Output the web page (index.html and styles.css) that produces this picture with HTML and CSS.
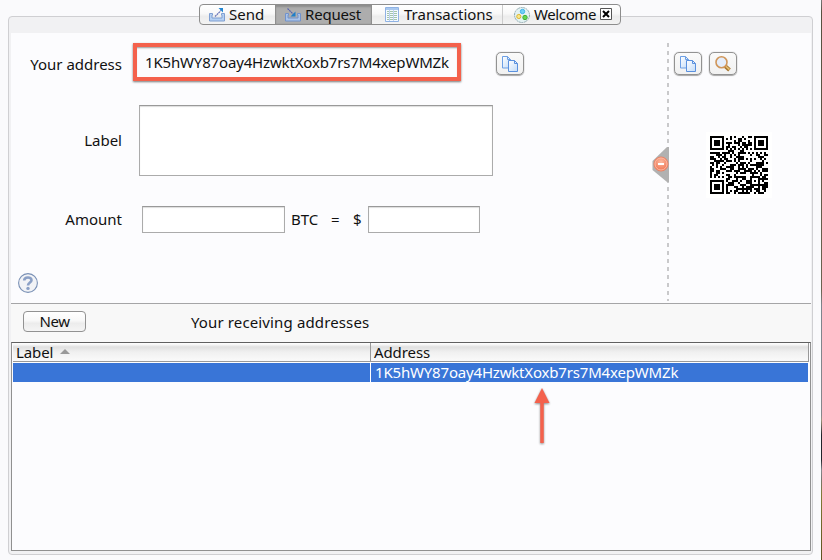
FILE: index.html
```
<!DOCTYPE html>
<html lang="en">
<head>
<meta charset="utf-8">
<title>Request</title>
<link rel="stylesheet" href="styles.css">
</head>
<body>
<svg class="defs" aria-hidden="true">
  <defs>
    <linearGradient id="sheet" x1="0" y1="0" x2="1" y2="1"><stop offset="0" stop-color="#fff"/><stop offset="1" stop-color="#c3dcf8"/></linearGradient>
    <radialGradient id="ball" cx=".5" cy=".35" r=".7"><stop offset="0" stop-color="#fbb9a0"/><stop offset="1" stop-color="#ef6c48"/></radialGradient>
    <symbol id="copy" viewBox="0 0 18 18">
      <path d="M1.500 1.500h5l3 3v8.500h-8z" fill="url(#sheet)" stroke="#6d9fe4"/>
      <path d="M6.500 1.500v3h3" fill="none" stroke="#6d9fe4"/>
      <path d="M7.500 5.500h6l3 3v8h-9z" fill="url(#sheet)" stroke="#5a90de"/>
      <path d="M13.500 5.500v3h3" fill="none" stroke="#5a90de"/>
    </symbol>
  </defs>
</svg>
<div class="window">
  <nav class="tabs">
    <div class="tab send">
      <svg width="16" height="15" viewBox="0 0 16 15"><path d="M.5 6.500h3V8H3v3h10V8h-.5V6.500h3v7.500H.5z" fill="#b5d0f2" stroke="#7f9fd2"/><path d="M6 9.500l6-6" stroke="#6673b8" stroke-width="1.200" stroke-dasharray="2 .5"/><path d="M9.500 1H14v4.500z" fill="#2286d2"/></svg>
      <span>Send</span>
    </div>
    <div class="tab request">
      <svg width="16" height="15" viewBox="0 0 16 15"><path d="M.5 6.500h3V8H3v3h10V8h-.5V6.500h3v7.500H.5z" fill="#a9c3e8" stroke="#7192cc"/><path d="M2.500 1.500l6 6" stroke="#5864ae" stroke-width="1.200" stroke-dasharray="2 .5"/><path d="M10.500 4.500V9.500H5.500z" fill="#1d7fc9"/></svg>
      <span>Request</span>
    </div>
    <div class="tab transactions">
      <svg width="14" height="15" viewBox="0 0 14 15"><path d="M.5.5h13v14H.5z" fill="#f4f9ff" stroke="#8fb2e4"/><path d="M1 2h12" stroke="#a9c8ef" stroke-width="2"/><path d="M2 4.500h10M2 6.500h10M2 8.500h10M2 10.500h10M2 12.500h10" stroke="#a3c5ab"/><path d="M4.500 3v11M8.500 3v11" stroke="#bfd3f0"/></svg>
      <span>Transactions</span>
    </div>
    <div class="tab welcome">
      <svg width="16" height="16" viewBox="0 0 16 16"><circle cx="8" cy="8" r="7.500" fill="#e3f2f3" stroke="#8fa9b0" stroke-dasharray="2 .6"/><circle cx="8.500" cy="4.500" r="2.200" fill="#6fd0f7" stroke="#42b4ea"/><circle cx="4.800" cy="9.500" r="2.100" fill="#f7e78a" stroke="#dfb52e"/><circle cx="11" cy="10.500" r="2.200" fill="#65d552" stroke="#3fb036"/></svg>
      <span>Welcome</span>
      <svg class="close" width="12" height="12" viewBox="0 0 12 12"><path d="M.5.5h11v11H.5z" fill="#fff" stroke="#555"/><path d="M3 3l6 6M9 3l-6 6" stroke="#000" stroke-width="2"/></svg>
    </div>
  </nav>
  <main class="panel">
    <section class="upper">
      <div class="form">
        <div class="row address">
          <label>Your address</label>
          <div class="marked"><span>1K5hWY87oay4HzwktXoxb7rs7M4xepWMZk</span></div>
          <button class="tool"><svg width="18" height="18"><use href="#copy"/></svg></button>
        </div>
        <div class="row note">
          <label>Label</label>
          <div class="field area"></div>
        </div>
        <div class="row amount">
          <label>Amount</label>
          <div class="field btc"></div>
          <span class="unit">BTC</span><span class="equals">=</span><span class="dollar">$</span>
          <div class="field usd"></div>
        </div>
        <svg class="help" width="20" height="20" viewBox="0 0 20 20"><circle cx="10" cy="10" r="9.400" fill="#f2f3f6" stroke="#7990b5" stroke-width="1.100"/><path d="M6.200 7.500C6.200 3.500 13.700 3.500 13.500 7.200C13.400 9.600 10 9.500 10 12.600" fill="none" stroke="#8ba0c6" stroke-width="2.600"/><circle cx="10" cy="15.400" r="1.700" fill="#8ba0c6"/></svg>
      </div>
      <div class="divider">
        <svg class="dashes" width="2" height="258"><path d="M1 0v258" stroke="#c9c9cb" stroke-width="2" stroke-dasharray="4 4"/></svg>
        <svg class="collapse" width="17" height="37" viewBox="0 0 17 37"><path d="M17 1h-2L.5 15v9l14.500 12h2z" fill="#b1b1b1"/><circle cx="9" cy="18" r="7" fill="url(#ball)" stroke="#ed8060"/><circle cx="9" cy="18" r="6" fill="none" stroke="#fbc3b0" stroke-width=".8"/><path d="M6 18h6" stroke="#fff" stroke-width="2"/></svg>
      </div>
      <aside class="side">
        <div class="tools">
          <button class="tool"><svg width="18" height="18"><use href="#copy"/></svg></button>
          <button class="tool"><svg width="18" height="18" viewBox="0 0 18 18"><path d="M11 11l4.500 4" stroke="#a87732" stroke-width="4"/><path d="M11.500 11l4 3.600" stroke="#e6c173" stroke-width="1.500"/><circle cx="7.500" cy="7.200" r="5.500" fill="#e4edfb" stroke="#d0965a" stroke-width="1.600"/></svg></button>
        </div>
        <div class="code" id="code"></div>
      </aside>
    </section>
    <section class="toolbar">
      <button class="new">New</button>
      <h2>Your receiving addresses</h2>
    </section>
    <section class="table">
      <div class="head"><div>Label<i class="sort"></i></div><div>Address</div></div>
      <div class="record"><div></div><div>1K5hWY87oay4HzwktXoxb7rs7M4xepWMZk</div></div>
      <svg class="arrow" width="18" height="60" viewBox="0 0 18 60"><path d="M9 14v42" stroke="#f4614c" stroke-width="3.500"/><path d="M9 1l7.500 15h-15z" fill="#f4614c"/></svg>
    </section>
  </main>
  <div class="edge"></div>
</div>
<script src="qr.js"></script>
</body>
</html>
```
FILE: styles.css
```
* { box-sizing: border-box; }

body {
  margin: 0;
  background: #fafafc;
  color: #111;
  font: 15px/20px "Noto Sans", sans-serif;
  white-space: nowrap;
}

svg { display: block; flex: none; }

.defs { position: absolute; width: 0; height: 0; }

button {
  flex: none;
  padding: 0;
  color: inherit;
  font: inherit;
}

.window {
  position: relative;
  display: flex;
  flex-direction: column;
  height: 560px;
  padding: 4px 9px 5px 8px;
  overflow: hidden;
}

.edge {
  position: absolute;
  top: 0;
  right: 0;
  width: 1px;
  height: 100%;
  background: linear-gradient(#777 0, #575040 12px, #6b6250 290px, #7d848c 305px, #85878c 415px, #9a917a 420px, #22242a 435px, #22242a 460px, #85878c 470px, #77746c 480px, #807a35 495px, #5e5020);
}

/* Tabs */
.tabs {
  position: relative;
  z-index: 1;
  display: flex;
  align-self: flex-start;
  width: 422px;
  height: 21px;
  margin-left: 191px;
  border: 1px solid #8d8d8d;
  border-radius: 4px;
  background: linear-gradient(#fff, #f8f8f8 45%, #ececec 60%, #f3f3f3);
}

.tab {
  display: flex;
  align-items: center;
  height: 19px;
}

.tab svg { margin-right: 5px; }
.tab span { margin: -1px 0 1px -1px; }

.send { width: 75px; padding-left: 9px; }

.request {
  width: 97px;
  padding-left: 10px;
  background: #adadad;
  box-shadow: inset 0 2px 2px #8d8d8d, inset 1px 0 1px #8d8d8d, inset -1px 0 1px #8d8d8d;
}

.request span { letter-spacing: -.18px; }

.transactions {
  width: 131px;
  padding-left: 13px;
  border-right: 1px solid #ccc;
}

.transactions span { margin-left: 0; }

.welcome { padding-left: 11px; }
.welcome span { letter-spacing: -.38px; }
.welcome .close { margin: -1px 0 1px 4px; }

/* Panel */
.panel {
  flex: 1;
  display: flex;
  flex-direction: column;
  width: 805px;
  margin-top: -9px;
  padding: 16px 1px 3px 2px;
  border: 1px solid #cfcfd2;
  border-radius: 4px;
  background: #f1f1f3;
}

.upper {
  display: flex;
  height: 271px;
  border-bottom: 1px solid #a5a5a7;
  background: #fcfcfe;
}

.form { width: 656px; padding-top: 10px; }

.row { display: flex; }

.row label {
  flex: none;
  width: 111px;
  margin-right: 1px;
  text-align: right;
}

.address { height: 62px; }
.address label { padding-top: 11px; }

.marked {
  flex: none;
  width: 328px;
  height: 38px;
  margin-left: 10px;
  padding: 5px 8px;
  border: 4px solid #f4614c;
  background: #fcfcfe;
  box-shadow: 0 1px 2px #777, inset 0 2px 2px -1px #999;
}

.marked span { letter-spacing: -.16px; }

.tool {
  display: grid;
  place-items: center;
  width: 28px;
  height: 23px;
  border: 1px solid #929292;
  border-radius: 5px;
  background: linear-gradient(#fafafa, #f1f1f1);
  box-shadow: 0 0 1px #999, 0 1px 1px #aaa;
}

.address .tool { margin: 9px 0 0 35px; }

.note { height: 101px; }
.note label { padding-top: 25px; }

.field {
  flex: none;
  border: 1px solid #ababab;
  border-top-color: #999;
  background: #fff;
  box-shadow: inset 0 1px 1px #ddd;
}

.area { width: 354px; height: 71px; margin-left: 16px; }

.amount label, .amount span { padding-top: 3px; }
.btc { width: 143px; height: 27px; margin-left: 19px; }
.unit { width: 40px; margin-left: 6px; }
.equals { width: 22px; }
.dollar { width: 15px; }
.usd { width: 112px; height: 27px; }

.help { margin: 40px 0 0 7px; }

.divider { position: relative; width: 2px; padding-top: 10px; }

.collapse { position: absolute; top: 113px; left: -15px; }

.side { padding: 19px 0 0 5px; }
.tools { display: flex; gap: 7px; }

.code {
  width: 66px;
  height: 66px;
  margin: 57px 0 0 32px;
  padding: 4px;
  background: #fff;
}

/* Toolbar */
.toolbar {
  display: flex;
  height: 38px;
  padding: 7px 0 0 12px;
  background: #f8f8f8;
}

.new {
  width: 63px;
  height: 21px;
  border: 1px solid #929292;
  border-radius: 4px;
  background: linear-gradient(#fff, #f8f8f8 45%, #ececec 60%, #f5f5f5);
  line-height: 19px;
  letter-spacing: -.4px;
}

.toolbar h2 {
  margin: 1px 0 0 105px;
  font-size: 15px;
  font-weight: normal;
  letter-spacing: .13px;
}

/* Address table */
.table {
  position: relative;
  flex: 1;
  padding: 0 1px;
  border: 1px solid #909090;
  border-top-color: #606060;
  background: #fcfcfe;
}

.head, .record { display: grid; grid-template-columns: 357px 1fr; }

.head {
  height: 19px;
  border-right: 1px solid #999;
  border-bottom: 1px solid #999;
  background: linear-gradient(#fcfcfc 1px, #e0e0e0 4px, #f0f0f0 9px, #fafafa);
  line-height: 18px;
}

.head div { display: flex; padding-left: 3px; letter-spacing: -.1px; }
.head div + div { border-left: 1px solid #999; }

.sort {
  width: 0;
  height: 0;
  margin: 6px 0 0 7px;
  border: 5px solid transparent;
  border-top: 0;
  border-bottom-color: #999;
}

.record {
  height: 20px;
  margin-right: 1px;
  border-top: 1px solid #fff;
  background: #3975d7;
  color: #fff;
  line-height: 19px;
}

.record div + div {
  padding-left: 4px;
  border-left: 1px solid #fff;
  letter-spacing: -.18px;
}

.arrow {
  position: absolute;
  top: 44px;
  left: 521px;
  filter: drop-shadow(0 1px 1px #888);
}
```
FILE: qr.js
```
// Version 3 QR code (29 x 29 modules), level L, byte mode.
function qr(text) {
  var n = 29, dl = 55, el = 15, i, j, x, y;
  var bits = [];
  function put(v, c) { while (c--) bits.push(v >> c & 1); }
  put(4, 4); put(text.length, 8);
  for (i = 0; i < text.length; i++) put(text.charCodeAt(i), 8);
  put(0, 4);
  for (var p = 0; bits.length < dl * 8; p ^= 1) put(p ? 17 : 236, 8);
  var data = [];
  for (i = 0; i < dl; i++) data.push(parseInt(bits.slice(i * 8, i * 8 + 8).join(''), 2));

  // Reed-Solomon remainder
  function mul(a, b) {
    var r = 0;
    for (; b; b >>= 1) { if (b & 1) r ^= a; a <<= 1; if (a & 256) a ^= 285; }
    return r;
  }
  var gen = [1], root = 1;
  for (i = 0; i < el; i++) {
    var next = gen.concat(0);
    for (j = 0; j < gen.length; j++) next[j + 1] ^= mul(gen[j], root);
    gen = next;
    root = mul(root, 2);
  }
  var rem = data.concat(Array(el).fill(0));
  for (i = 0; i < dl; i++) {
    var f = rem[i];
    for (j = 0; j <= el; j++) rem[i + j] ^= mul(gen[j], f);
  }
  bits = [];
  data.concat(rem.slice(dl)).forEach(function (c) { put(c, 8); });

  var masks = [
    function (y, x) { return (x + y) % 2; },
    function (y) { return y % 2; },
    function (y, x) { return x % 3; },
    function (y, x) { return (x + y) % 3; },
    function (y, x) { return ((x / 3 | 0) + (y >> 1)) % 2; },
    function (y, x) { return x * y % 2 + x * y % 3; },
    function (y, x) { return (x * y % 2 + x * y % 3) % 2; },
    function (y, x) { return ((x + y) % 2 + x * y % 3) % 2; }
  ];

  function build(mask) {
    var m = [], used = [];
    for (i = 0; i < n; i++) { m.push(Array(n).fill(0)); used.push(Array(n).fill(0)); }
    function set(y, x, v) {
      if (y >= 0 && x >= 0 && y < n && x < n) { m[y][x] = v ? 1 : 0; used[y][x] = 1; }
    }
    for (i = 0; i < n; i++) { set(6, i, i % 2 === 0); set(i, 6, i % 2 === 0); }
    [[3, 3], [3, n - 4], [n - 4, 3]].forEach(function (c) {
      for (y = -4; y <= 4; y++) for (x = -4; x <= 4; x++) {
        var d = Math.max(Math.abs(x), Math.abs(y));
        set(c[0] + y, c[1] + x, d !== 2 && d !== 4);
      }
    });
    for (y = -2; y <= 2; y++) for (x = -2; x <= 2; x++)
      set(22 + y, 22 + x, Math.max(Math.abs(x), Math.abs(y)) !== 1);
    var fd = 8 | mask, r = fd;
    for (i = 0; i < 10; i++) r = r << 1 ^ (r >> 9) * 0x537;
    var fb = (fd << 10 | r) ^ 0x5412;
    function b(k) { return fb >> k & 1; }
    for (i = 0; i < 6; i++) set(i, 8, b(i));
    set(7, 8, b(6)); set(8, 8, b(7)); set(8, 7, b(8));
    for (i = 9; i < 15; i++) set(8, 14 - i, b(i));
    for (i = 0; i < 8; i++) set(8, n - 1 - i, b(i));
    for (i = 8; i < 15; i++) set(n - 15 + i, 8, b(i));
    set(n - 8, 8, 1);
    var k = 0;
    for (var right = n - 1; right >= 1; right -= 2) {
      if (right === 6) right = 5;
      for (var v = 0; v < n; v++) for (j = 0; j < 2; j++) {
        x = right - j;
        y = ((right + 1) & 2) === 0 ? n - 1 - v : v;
        if (!used[y][x]) m[y][x] = (bits[k++] || 0) ^ (masks[mask](y, x) === 0 ? 1 : 0);
      }
    }
    return m;
  }

  function penalty(m) {
    var score = 0, dark = 0;
    var lines = m.map(function (r) { return r.join(''); });
    for (x = 0; x < n; x++) lines.push(m.map(function (r) { return r[x]; }).join(''));
    lines.forEach(function (s) {
      (s.match(/0{5,}|1{5,}/g) || []).forEach(function (run) { score += run.length - 2; });
      for (i = 0; i + 11 <= n; i++) {
        var w = s.substr(i, 11);
        if (w === '10111010000' || w === '00001011101') score += 40;
      }
    });
    for (y = 0; y < n; y++) for (x = 0; x < n; x++) {
      dark += m[y][x];
      if (y && x && m[y][x] === m[y - 1][x] && m[y][x] === m[y][x - 1] && m[y][x] === m[y - 1][x - 1]) score += 3;
    }
    return score + Math.floor(Math.abs(dark / (n * n) * 20 - 10)) * 10;
  }

  var best, low = Infinity;
  for (var q = 0; q < 8; q++) {
    var m = build(q), s = penalty(m);
    if (s < low) { low = s; best = m; }
  }
  var d = '';
  for (y = 0; y < n; y++) for (x = 0; x < n; x++) if (best[y][x]) d += 'M' + x + ' ' + y + 'h1v1h-1z';
  return '<svg width="58" height="58" viewBox="0 0 29 29" shape-rendering="crispEdges"><path d="' + d + '"/></svg>';
}

document.getElementById('code').innerHTML = qr('bitcoin:1K5hWY87oay4HzwktXoxb7rs7M4xepWMZk');
```
